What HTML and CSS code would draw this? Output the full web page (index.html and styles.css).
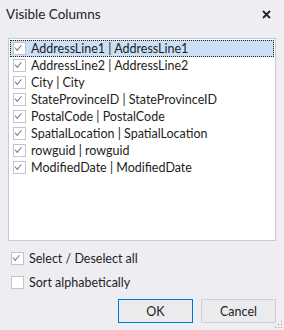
FILE: index.html
```html
<!DOCTYPE html>
<html lang="en">
<head>
    <meta charset="utf-8">
    <title>Visible Columns</title>
    <link rel="stylesheet" href="styles.css">
</head>
<body>
<div class="dialog">
    <div class="header">
        <span class="title">Visible Columns</span>
        <svg class="close" width="9" height="9" viewBox="0 0 9 9"><path d="M1 1 L8 8 M8 1 L1 8" stroke="#222" stroke-width="1.8"/></svg>
    </div>

    <div class="list">
        <div class="row selected"><span class="box checked"></span>AddressLine1 | AddressLine1</div>
        <div class="row"><span class="box checked"></span>AddressLine2 | AddressLine2</div>
        <div class="row"><span class="box checked"></span>City | City</div>
        <div class="row"><span class="box checked"></span>StateProvinceID | StateProvinceID</div>
        <div class="row"><span class="box checked"></span>PostalCode | PostalCode</div>
        <div class="row"><span class="box checked"></span>SpatialLocation | SpatialLocation</div>
        <div class="row"><span class="box checked"></span>rowguid | rowguid</div>
        <div class="row"><span class="box checked"></span>ModifiedDate | ModifiedDate</div>
    </div>

    <div class="options">
        <div class="option"><span class="box checked"></span>Select / Deselect all</div>
        <div class="option"><span class="box"></span>Sort alphabetically</div>
    </div>

    <div class="buttons">
        <button class="btn default">OK</button>
        <button class="btn">Cancel</button>
    </div>
    <svg class="grip" width="8" height="8" viewBox="0 0 8 8">
        <rect x="6" y="0" width="1" height="1" fill="#999"/>
        <rect x="3" y="3" width="1" height="1" fill="#999"/>
        <rect x="6" y="3" width="1" height="1" fill="#999"/>
        <rect x="0" y="6" width="1" height="1" fill="#999"/>
        <rect x="3" y="6" width="1" height="1" fill="#999"/>
        <rect x="6" y="6" width="1" height="1" fill="#999"/>
    </svg>
</div>
</body>
</html>
```

FILE: styles.css
```css
body {
    margin: 0;
    background-color: #eeedf2;
    font-family: Lato, 'Open Sans', sans-serif;
    font-size: 12.5px;
    color: #1e1e1e;
}
.dialog {
    position: relative;
    width: 284px;
    height: 330px;
}
.header {
    display: flex;
    justify-content: space-between;
    align-items: center;
    height: 28px;
    padding: 0 13px 0 6px;
}
.title {
    font-size: 13.5px;
    color: #222;
}
.close {
    margin-top: 1px;
}
.list {
    margin: 10px 8px 0 8px;
    height: 199px;
    padding: 1px;
    background: white;
    border: 1px solid #c9c9d1;
}
.row {
    display: flex;
    align-items: center;
    height: 13px;
    padding: 1px 0 1px 2px;
    border: 1px dotted transparent;
    white-space: nowrap;
}
.row.selected {
    background-color: #cce0f5;
    border-color: #222;
}
.box {
    flex: none;
    position: relative;
    width: 11px;
    height: 11px;
    margin-right: 5px;
    background: white;
    border: 1px solid #c4c4cc;
}
.box.checked::after {
    content: '';
    position: absolute;
    left: 2px;
    top: 2px;
    width: 6px;
    height: 3px;
    border-left: 1.3px solid #7a7a7a;
    border-bottom: 1.3px solid #7a7a7a;
    transform: rotate(-50deg) skewX(-8deg);
    transform-origin: 40% 90%;
}
.options {
    padding: 11px 0 0 11px;
}
.option {
    display: flex;
    align-items: center;
    height: 13px;
    margin-bottom: 11px;
}
.buttons {
    display: flex;
    justify-content: flex-end;
    gap: 8px;
    padding: 0 8px;
    margin-top: -1px;
}
.btn {
    width: 75px;
    height: 24px;
    font-family: inherit;
    font-size: 12.5px;
    color: #1e1e1e;
    background: #ebebee;
    border: 1px solid #cfcfd6;
    padding: 0;
}
.btn.default {
    border: 1.5px solid #0078d7;
}
.grip {
    position: absolute;
    right: 1px;
    bottom: 1px;
}
```
